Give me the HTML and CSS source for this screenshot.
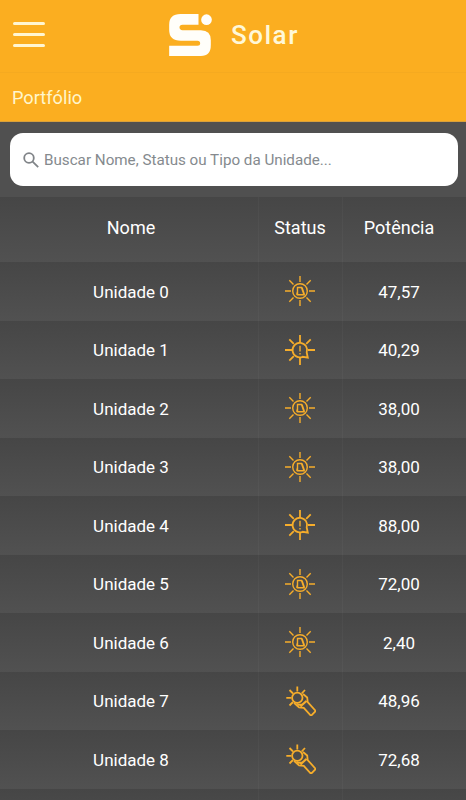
FILE: index.html
```html
<!DOCTYPE html>
<html lang="pt-BR">
<head>
    <meta charset="UTF-8">
    <meta name="viewport" content="width=device-width, initial-scale=1.0">
    <title>Solar - Portfólio</title>
    <link rel="stylesheet" href="styles.css">
</head>
<body>
    <svg class="sprite" aria-hidden="true">
        <symbol id="sun-ok" viewBox="0 0 30 30">
            <circle cx="15" cy="15" r="7.300" />
            <path d="M15 0v6M15 24v6M0 15h6M24 15h6M4.300 4.300l4.200 4.200M21.500 21.500l4.200 4.200M4.300 25.700l4.200-4.200M21.500 8.500l4.200-4.200" />
            <path d="M12.500 11.500h4l2.500 7.300h-6.500zM17 11.500l2.500 7.300M12.500 15.500l-.8 3.300" />
        </symbol>
        <symbol id="sun-alert" viewBox="0 0 30 30">
            <path class="bold" d="M21.700 17.500l1.100 5.200-5.200-.9A7.300 7.300 0 1 1 21.700 17.500z" />
            <path class="bold" d="M15 0v7M15 23v7M0 15h7M23 15h7M4.300 4.300l4.500 4.500M4.300 25.700l4.500-4.500M21.200 8.800l4.500-4.500" />
            <path d="M15 10.800v5.700M15 18v1.500" />
        </symbol>
        <symbol id="sun-repair" viewBox="0 0 30 30">
            <circle class="bold" cx="11.300" cy="11.800" r="5.200" />
            <path class="bold" d="M11.300.5v5M.3 11.800h5M3.500 4l3.500 3.500M19 4l-3.300 3.500M3.500 19.500l3.500-3.500" />
            <path class="bold" d="M17 8l4.200 3.500.5 4.500 8 9-4.700 4.800-7.200-8-4.800-.5-5-4.500M11.300 19l5-.5 4-3.500M14.500 20.500l6-5.500" />
        </symbol>
    </svg>

    <header class="topbar">
        <button class="menu" aria-label="Menu"><span></span><span></span><span></span></button>
        <div class="brand">
            <svg class="brand-logo" viewBox="507 42 128 126">
                <path d="M595 42v32h-48q-9 0-9 8t9 9h55q30 0 30 30v14q0 33-30 33h-95v-31h85q8 0 8-7.500t-8-7.500h-50q-35 0-35-32v-16q0-32 34-32z" />
                <circle cx="619" cy="59" r="16" />
            </svg>
            <span class="brand-name">Solar</span>
        </div>
    </header>
    <h1 class="title">Portfólio</h1>

    <div class="search">
        <label class="search-box">
            <svg class="search-icon" viewBox="0 0 16 16">
                <circle cx="6" cy="6" r="4.800" />
                <path d="M9.600 9.600l5.600 5.600" />
            </svg>
            <input type="text" placeholder="Buscar Nome, Status ou Tipo da Unidade...">
        </label>
    </div>

    <div class="table">
        <div class="row head"><div>Nome</div><div>Status</div><div>Potência</div></div>
        <div class="row"><div>Unidade 0</div><div><svg class="icon"><use href="#sun-ok" /></svg></div><div>47,57</div></div>
        <div class="row"><div>Unidade 1</div><div><svg class="icon"><use href="#sun-alert" /></svg></div><div>40,29</div></div>
        <div class="row"><div>Unidade 2</div><div><svg class="icon"><use href="#sun-ok" /></svg></div><div>38,00</div></div>
        <div class="row"><div>Unidade 3</div><div><svg class="icon"><use href="#sun-ok" /></svg></div><div>38,00</div></div>
        <div class="row"><div>Unidade 4</div><div><svg class="icon"><use href="#sun-alert" /></svg></div><div>88,00</div></div>
        <div class="row"><div>Unidade 5</div><div><svg class="icon"><use href="#sun-ok" /></svg></div><div>72,00</div></div>
        <div class="row"><div>Unidade 6</div><div><svg class="icon"><use href="#sun-ok" /></svg></div><div>2,40</div></div>
        <div class="row"><div>Unidade 7</div><div><svg class="icon repair"><use href="#sun-repair" /></svg></div><div>48,96</div></div>
        <div class="row"><div>Unidade 8</div><div><svg class="icon repair"><use href="#sun-repair" /></svg></div><div>72,68</div></div>
        <div class="row last"><div></div><div></div><div></div></div>
    </div>
</body>
</html>
```

FILE: styles.css
```css
* { box-sizing: border-box; }
body {
    margin: 0;
    background: #505050;
    color: #fff;
    font-family: Roboto, "Liberation Sans", sans-serif;
}
.sprite { display: none; }

.topbar {
    display: grid;
    grid-template-columns: 156px 1fr;
    height: 73px;
    padding-left: 13px;
    background: #fbae20;
    border-bottom: 1px solid #f5aa20;
}
.menu {
    display: flex;
    flex-direction: column;
    gap: 8px;
    width: 33px;
    height: 26px;
    margin-top: 22px;
    padding: 0;
    border: 0;
    background: none;
}
.menu span {
    width: 32px;
    height: 3px;
    border-radius: 2px;
    background: #fff6d2;
}
.brand { display: flex; gap: 19px; padding-top: 14px; }
.brand-logo { width: 43px; height: 42px; fill: #fffefa; }
.brand-name {
    color: #fff8d8;
    font-size: 26px;
    font-weight: 500;
    line-height: 42px;
    letter-spacing: 1.5px;
}
.title {
    height: 49px;
    margin: 0;
    padding-left: 12px;
    background: #fbae20;
    border-bottom: 1px solid #d9a03a;
    color: #fff6cc;
    font-size: 18.2px;
    font-weight: 400;
    line-height: 50px;
}

.search { height: 75px; padding: 11px 8px 0 10px; }
.search-box {
    display: flex;
    align-items: center;
    gap: 5px;
    height: 53px;
    padding: 0 13px;
    border-radius: 13px;
    background: #fff;
}
.search-icon {
    flex: none;
    width: 16px;
    height: 16px;
    fill: none;
    stroke: #808488;
    stroke-width: 1.8;
}
.search-box input {
    flex: 1;
    padding: 0;
    border: 0;
    outline: 0;
    font: 15.2px Roboto, "Liberation Sans", sans-serif;
}
.search-box input::placeholder { color: #858a8e; }

.row {
    display: grid;
    grid-template-columns: 258px 84px 1fr;
    height: 58.5px;
    background: linear-gradient(#464646, #515151) 0 0 / 100% 58.5px;
    font-size: 17px;
}
.row > div {
    display: flex;
    align-items: center;
    justify-content: center;
    padding-top: 1px;
}
.row > div:first-child { padding-left: 4px; }
.row > div:nth-child(2) { padding-right: 1px; }
.row > div:last-child { padding-right: 11px; }
.row > div + div { border-left: 1px solid rgba(255, 255, 255, 0.03); }
.head {
    height: 65px;
    background-size: 100% 65px;
    font-size: 18px;
}
.head > div { padding-bottom: 6px; }
.last { height: 11px; }

.icon {
    width: 30px;
    height: 30px;
    margin-top: -1px;
    fill: none;
    stroke: #f6ad2b;
    stroke-width: 1.4;
}
.repair { margin-left: 1px; }
.bold { stroke-width: 1.8; }
```
